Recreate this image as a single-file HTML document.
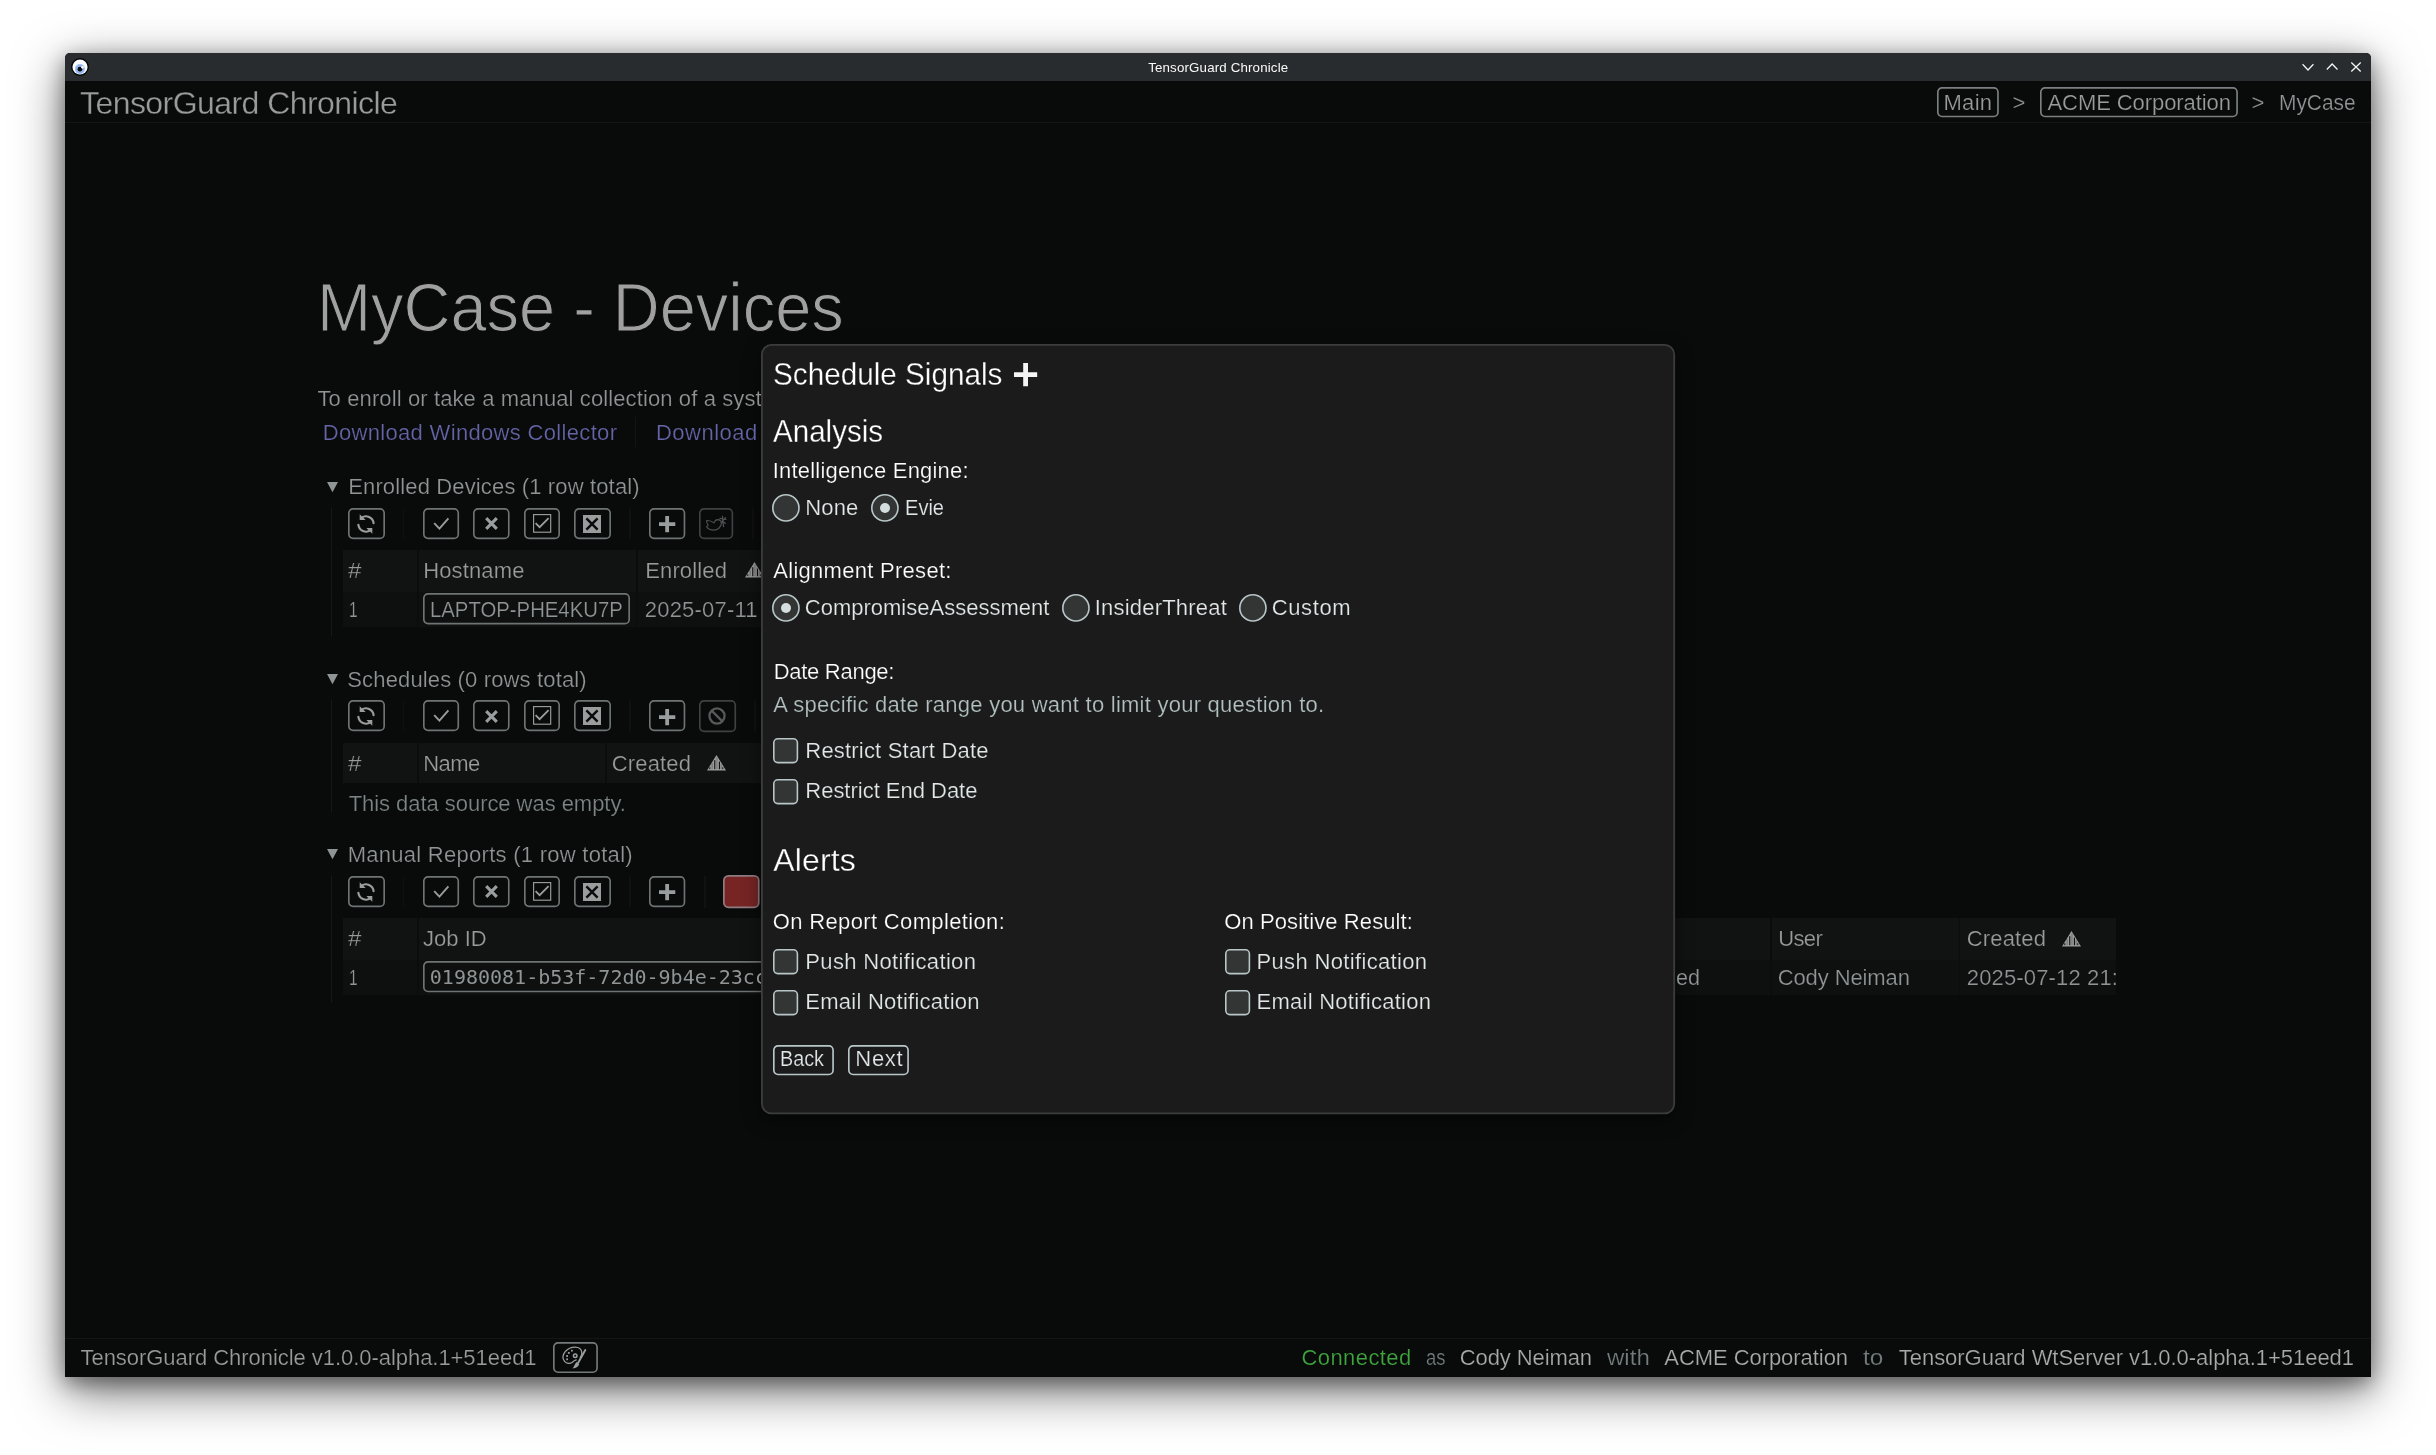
<!DOCTYPE html>
<html lang="en"><head><meta charset="utf-8"><title>TensorGuard Chronicle</title>
<style>
html,body{margin:0;padding:0;background:#fff}
body{width:2436px;height:1455px;overflow:hidden;position:relative;font-family:"Liberation Sans", sans-serif}
#page{position:absolute;left:0;top:0;width:2436px;height:1455px;overflow:hidden}
.a{position:absolute;box-sizing:border-box}
.t{position:absolute;white-space:nowrap;line-height:1;display:block}
#txt{position:absolute;left:0;top:0;width:2436px;height:1455px;will-change:transform}
svg{position:absolute;overflow:visible}
</style></head><body><div id="page">
<div class="a" style="left:65.00px;top:53.00px;width:2306.00px;height:1324.00px;background:#090a0a;border-radius:5px 5px 0 0;box-shadow:0 14px 50px rgba(0,0,0,.56),0 6px 20px rgba(0,0,0,.38)"></div>
<div class="a" style="left:65.00px;top:53.00px;width:2306.00px;height:28.00px;background:#282c2e;border-radius:5px 5px 0 0"></div>
<svg style="left:69.85px;top:57.15px" width="20" height="20" viewBox="0 0 20 20"><circle cx="10" cy="10" r="8.9" fill="#050506"/><circle cx="10" cy="10" r="7.55" fill="#fbfcff"/><circle cx="9.95" cy="12.1" r="5.0" fill="#9fc0ee"/><circle cx="9.95" cy="12.1" r="3.9" fill="#7fa6e4" opacity=".6"/><circle cx="9.95" cy="12.2" r="2.35" fill="#05070c"/><circle cx="12.4" cy="10.3" r="1.25" fill="#ffffff"/></svg>
<svg style="left:2302.00px;top:60.00px" width="12" height="12" viewBox="0 0 12 12"><path d="M0.6 4.3 L6.0 10.0 L11.4 4.3" fill="none" stroke="#f6f6f6" stroke-width="1.25"/></svg>
<svg style="left:2326.00px;top:60.00px" width="12" height="12" viewBox="0 0 12 12"><path d="M0.8 9.5 L6.1 4.0 L11.5 9.5" fill="none" stroke="#f6f6f6" stroke-width="1.25"/></svg>
<svg style="left:2350.00px;top:60.00px" width="12" height="12" viewBox="0 0 12 12"><path d="M1.3 2.5 L10.7 11.5 M10.7 2.5 L1.3 11.5" fill="none" stroke="#f6f6f6" stroke-width="1.25"/></svg>
<div class="a" style="left:65.00px;top:122.20px;width:2306.00px;height:1.20px;background:#141515"></div>
<div class="a" style="left:65.00px;top:1337.80px;width:2306.00px;height:1.20px;background:#141515"></div>
<svg style="left:1937.00px;top:87.40px" width="61.80" height="30.30"><rect x="0.82" y="0.82" width="60.15" height="28.65" rx="4.2" ry="4.2" fill="none" stroke="#7c8080" stroke-width="1.65"/></svg>
<svg style="left:2040.00px;top:87.40px" width="197.90" height="30.30"><rect x="0.82" y="0.82" width="196.25" height="28.65" rx="4.2" ry="4.2" fill="none" stroke="#7c8080" stroke-width="1.65"/></svg>
<div class="a" style="left:634.80px;top:416.50px;width:1.40px;height:30.50px;background:#131414"></div>
<svg style="left:326.90px;top:481.60px" width="11" height="10.2" viewBox="0 0 11 10.2"><path d="M0 0 H11 L5.5 10.2 Z" fill="#8f9494"/></svg>
<svg style="left:326.90px;top:674.20px" width="11" height="10.2" viewBox="0 0 11 10.2"><path d="M0 0 H11 L5.5 10.2 Z" fill="#8f9494"/></svg>
<svg style="left:326.90px;top:849.40px" width="11" height="10.2" viewBox="0 0 11 10.2"><path d="M0 0 H11 L5.5 10.2 Z" fill="#8f9494"/></svg>
<div class="a" style="left:331.20px;top:507.50px;width:1.30px;height:128.30px;background:#161717"></div>
<div class="a" style="left:331.20px;top:700.00px;width:1.30px;height:111.70px;background:#161717"></div>
<div class="a" style="left:331.20px;top:876.00px;width:1.30px;height:127.00px;background:#161717"></div>
<svg style="left:348.00px;top:507.90px" width="37.00" height="31.20"><rect x="0.82" y="0.82" width="35.35" height="29.55" rx="4.2" ry="4.2" fill="none" stroke="#6e7474" stroke-width="1.65"/></svg>
<svg style="left:423.00px;top:507.90px" width="36.10" height="31.20"><rect x="0.82" y="0.82" width="34.45" height="29.55" rx="4.2" ry="4.2" fill="none" stroke="#6e7474" stroke-width="1.65"/></svg>
<svg style="left:473.00px;top:507.90px" width="36.60" height="31.20"><rect x="0.82" y="0.82" width="34.95" height="29.55" rx="4.2" ry="4.2" fill="none" stroke="#6e7474" stroke-width="1.65"/></svg>
<svg style="left:524.00px;top:507.90px" width="36.00" height="31.20"><rect x="0.82" y="0.82" width="34.35" height="29.55" rx="4.2" ry="4.2" fill="none" stroke="#6e7474" stroke-width="1.65"/></svg>
<svg style="left:574.00px;top:507.90px" width="37.00" height="31.20"><rect x="0.82" y="0.82" width="35.35" height="29.55" rx="4.2" ry="4.2" fill="none" stroke="#6e7474" stroke-width="1.65"/></svg>
<svg style="left:648.90px;top:507.90px" width="36.30" height="31.20"><rect x="0.82" y="0.82" width="34.65" height="29.55" rx="4.2" ry="4.2" fill="none" stroke="#6e7474" stroke-width="1.65"/></svg>
<div class="a" style="left:402.80px;top:507.90px;width:1.50px;height:31.20px;background:#0f100f"></div>
<div class="a" style="left:629.30px;top:507.90px;width:1.50px;height:31.20px;background:#0f100f"></div>
<svg style="left:356.30px;top:512.80px" width="20" height="22" viewBox="0 0 20 22"><g transform="translate(10,11)"><g fill="none" stroke="#999d9d" stroke-width="2.2" stroke-linecap="round"><path d="M-4.6 -6.2 A7.7 7.7 0 0 1 7.6 -0.9"/><path d="M-7.6 0.9 A7.7 7.7 0 0 0 4.6 6.2"/></g><path d="M-6.3 -9.8 L-6.3 -4.0 L-0.3 -4.0 Z" fill="#999d9d"/><path d="M6.3 9.8 L6.3 4.0 L0.3 4.0 Z" fill="#999d9d"/></g></svg>
<svg style="left:423.00px;top:507.90px" width="36" height="31" viewBox="0 0 36 31"><path d="M11.2 15.2 L16.4 20.6 L25.4 10.4" fill="none" stroke="#999d9d" stroke-width="1.9"/></svg>
<svg style="left:484.70px;top:517.10px" width="13" height="13" viewBox="0 0 13 13"><path d="M1.2 1.2 L11.8 11.8 M11.8 1.2 L1.2 11.8" fill="none" stroke="#999d9d" stroke-width="3.1"/></svg>
<svg style="left:532.90px;top:513.70px" width="18.3" height="18.8" viewBox="0 0 18.3 18.8"><rect x="0.6" y="0.6" width="17.1" height="17.6" fill="none" stroke="#999d9d" stroke-width="1.15"/><path d="M2.6 9.2 L6.6 13.2 L15.6 4.2" fill="none" stroke="#999d9d" stroke-width="1.8"/></svg>
<svg style="left:583.05px;top:514.75px" width="18" height="18" viewBox="0 0 18 18"><rect x="0" y="0" width="18" height="18" fill="#999d9d"/><path d="M3.4 3.4 L14.6 14.6 M14.6 3.4 L3.4 14.6" fill="none" stroke="#090a0a" stroke-width="2.4"/></svg>
<svg style="left:658.80px;top:515.95px" width="16.3" height="16.3" viewBox="0 0 16.3 16.3"><path d="M8.15 0 V16.3 M0 8.15 H16.3" fill="none" stroke="#999d9d" stroke-width="3.8"/></svg>
<svg style="left:698.90px;top:507.90px" width="34.20" height="31.20"><rect x="0.82" y="0.82" width="32.55" height="29.55" rx="4.2" ry="4.2" fill="none" stroke="#3e4242" stroke-width="1.65"/></svg>
<svg style="left:698.90px;top:507.90px" width="35" height="32" viewBox="0 0 35 32"><g fill="none" stroke="#4b5050" stroke-width="1.15" stroke-linecap="round" stroke-linejoin="round"><path d="M7.6 12.5 C9.5 12.3 12.5 13 14.9 14.9 C15.5 13.2 17 11.8 18.8 11.6 C21.2 11.6 22.6 13.4 22.4 15.4 C22.2 18.8 19 22 14.9 22.1 C11.8 22.1 9 20.8 7.6 18.6 C8.4 18.2 9 17.6 9.2 17 C8.2 15.8 7.6 14.2 7.6 12.5 Z"/><path d="M23.5 8.4 L23.7 13.2 L24.6 18.6 M21.0 10.4 L26.8 11.4 M26.4 9.6 L22.2 14.6 M23.7 13.2 L26.4 15.4" stroke-width="1.3"/></g></svg>
<div class="a" style="left:752.20px;top:507.90px;width:1.50px;height:31.20px;background:#0f100f"></div>
<svg style="left:348.00px;top:700.45px" width="37.00" height="31.20"><rect x="0.82" y="0.82" width="35.35" height="29.55" rx="4.2" ry="4.2" fill="none" stroke="#6e7474" stroke-width="1.65"/></svg>
<svg style="left:423.00px;top:700.45px" width="36.10" height="31.20"><rect x="0.82" y="0.82" width="34.45" height="29.55" rx="4.2" ry="4.2" fill="none" stroke="#6e7474" stroke-width="1.65"/></svg>
<svg style="left:473.00px;top:700.45px" width="36.60" height="31.20"><rect x="0.82" y="0.82" width="34.95" height="29.55" rx="4.2" ry="4.2" fill="none" stroke="#6e7474" stroke-width="1.65"/></svg>
<svg style="left:524.00px;top:700.45px" width="36.00" height="31.20"><rect x="0.82" y="0.82" width="34.35" height="29.55" rx="4.2" ry="4.2" fill="none" stroke="#6e7474" stroke-width="1.65"/></svg>
<svg style="left:574.00px;top:700.45px" width="37.00" height="31.20"><rect x="0.82" y="0.82" width="35.35" height="29.55" rx="4.2" ry="4.2" fill="none" stroke="#6e7474" stroke-width="1.65"/></svg>
<svg style="left:648.90px;top:700.45px" width="36.30" height="31.20"><rect x="0.82" y="0.82" width="34.65" height="29.55" rx="4.2" ry="4.2" fill="none" stroke="#6e7474" stroke-width="1.65"/></svg>
<div class="a" style="left:402.80px;top:700.45px;width:1.50px;height:31.20px;background:#0f100f"></div>
<div class="a" style="left:629.30px;top:700.45px;width:1.50px;height:31.20px;background:#0f100f"></div>
<svg style="left:356.30px;top:705.35px" width="20" height="22" viewBox="0 0 20 22"><g transform="translate(10,11)"><g fill="none" stroke="#999d9d" stroke-width="2.2" stroke-linecap="round"><path d="M-4.6 -6.2 A7.7 7.7 0 0 1 7.6 -0.9"/><path d="M-7.6 0.9 A7.7 7.7 0 0 0 4.6 6.2"/></g><path d="M-6.3 -9.8 L-6.3 -4.0 L-0.3 -4.0 Z" fill="#999d9d"/><path d="M6.3 9.8 L6.3 4.0 L0.3 4.0 Z" fill="#999d9d"/></g></svg>
<svg style="left:423.00px;top:700.45px" width="36" height="31" viewBox="0 0 36 31"><path d="M11.2 15.2 L16.4 20.6 L25.4 10.4" fill="none" stroke="#999d9d" stroke-width="1.9"/></svg>
<svg style="left:484.70px;top:709.65px" width="13" height="13" viewBox="0 0 13 13"><path d="M1.2 1.2 L11.8 11.8 M11.8 1.2 L1.2 11.8" fill="none" stroke="#999d9d" stroke-width="3.1"/></svg>
<svg style="left:532.90px;top:706.25px" width="18.3" height="18.8" viewBox="0 0 18.3 18.8"><rect x="0.6" y="0.6" width="17.1" height="17.6" fill="none" stroke="#999d9d" stroke-width="1.15"/><path d="M2.6 9.2 L6.6 13.2 L15.6 4.2" fill="none" stroke="#999d9d" stroke-width="1.8"/></svg>
<svg style="left:583.05px;top:707.30px" width="18" height="18" viewBox="0 0 18 18"><rect x="0" y="0" width="18" height="18" fill="#999d9d"/><path d="M3.4 3.4 L14.6 14.6 M14.6 3.4 L3.4 14.6" fill="none" stroke="#090a0a" stroke-width="2.4"/></svg>
<svg style="left:658.80px;top:708.50px" width="16.3" height="16.3" viewBox="0 0 16.3 16.3"><path d="M8.15 0 V16.3 M0 8.15 H16.3" fill="none" stroke="#999d9d" stroke-width="3.8"/></svg>
<svg style="left:698.90px;top:699.95px" width="37.10" height="32.20"><rect x="0.82" y="0.82" width="35.45" height="30.55" rx="4.2" ry="4.2" fill="none" stroke="#3e4242" stroke-width="1.65"/></svg>
<svg style="left:707.25px;top:705.60px" width="20" height="20" viewBox="0 0 20 20"><circle cx="10" cy="10" r="7.55" fill="none" stroke="#555a5a" stroke-width="2.3"/><path d="M4.6 4.6 L15.4 15.4" stroke="#555a5a" stroke-width="2.3"/></svg>
<div class="a" style="left:754.00px;top:700.45px;width:1.50px;height:31.20px;background:#0f100f"></div>
<svg style="left:348.00px;top:875.90px" width="37.00" height="31.20"><rect x="0.82" y="0.82" width="35.35" height="29.55" rx="4.2" ry="4.2" fill="none" stroke="#6e7474" stroke-width="1.65"/></svg>
<svg style="left:423.00px;top:875.90px" width="36.10" height="31.20"><rect x="0.82" y="0.82" width="34.45" height="29.55" rx="4.2" ry="4.2" fill="none" stroke="#6e7474" stroke-width="1.65"/></svg>
<svg style="left:473.00px;top:875.90px" width="36.60" height="31.20"><rect x="0.82" y="0.82" width="34.95" height="29.55" rx="4.2" ry="4.2" fill="none" stroke="#6e7474" stroke-width="1.65"/></svg>
<svg style="left:524.00px;top:875.90px" width="36.00" height="31.20"><rect x="0.82" y="0.82" width="34.35" height="29.55" rx="4.2" ry="4.2" fill="none" stroke="#6e7474" stroke-width="1.65"/></svg>
<svg style="left:574.00px;top:875.90px" width="37.00" height="31.20"><rect x="0.82" y="0.82" width="35.35" height="29.55" rx="4.2" ry="4.2" fill="none" stroke="#6e7474" stroke-width="1.65"/></svg>
<svg style="left:648.90px;top:875.90px" width="36.30" height="31.20"><rect x="0.82" y="0.82" width="34.65" height="29.55" rx="4.2" ry="4.2" fill="none" stroke="#6e7474" stroke-width="1.65"/></svg>
<div class="a" style="left:402.80px;top:875.90px;width:1.50px;height:31.20px;background:#0f100f"></div>
<div class="a" style="left:629.30px;top:875.90px;width:1.50px;height:31.20px;background:#0f100f"></div>
<svg style="left:356.30px;top:880.80px" width="20" height="22" viewBox="0 0 20 22"><g transform="translate(10,11)"><g fill="none" stroke="#999d9d" stroke-width="2.2" stroke-linecap="round"><path d="M-4.6 -6.2 A7.7 7.7 0 0 1 7.6 -0.9"/><path d="M-7.6 0.9 A7.7 7.7 0 0 0 4.6 6.2"/></g><path d="M-6.3 -9.8 L-6.3 -4.0 L-0.3 -4.0 Z" fill="#999d9d"/><path d="M6.3 9.8 L6.3 4.0 L0.3 4.0 Z" fill="#999d9d"/></g></svg>
<svg style="left:423.00px;top:875.90px" width="36" height="31" viewBox="0 0 36 31"><path d="M11.2 15.2 L16.4 20.6 L25.4 10.4" fill="none" stroke="#999d9d" stroke-width="1.9"/></svg>
<svg style="left:484.70px;top:885.10px" width="13" height="13" viewBox="0 0 13 13"><path d="M1.2 1.2 L11.8 11.8 M11.8 1.2 L1.2 11.8" fill="none" stroke="#999d9d" stroke-width="3.1"/></svg>
<svg style="left:532.90px;top:881.70px" width="18.3" height="18.8" viewBox="0 0 18.3 18.8"><rect x="0.6" y="0.6" width="17.1" height="17.6" fill="none" stroke="#999d9d" stroke-width="1.15"/><path d="M2.6 9.2 L6.6 13.2 L15.6 4.2" fill="none" stroke="#999d9d" stroke-width="1.8"/></svg>
<svg style="left:583.05px;top:882.75px" width="18" height="18" viewBox="0 0 18 18"><rect x="0" y="0" width="18" height="18" fill="#999d9d"/><path d="M3.4 3.4 L14.6 14.6 M14.6 3.4 L3.4 14.6" fill="none" stroke="#090a0a" stroke-width="2.4"/></svg>
<svg style="left:658.80px;top:883.95px" width="16.3" height="16.3" viewBox="0 0 16.3 16.3"><path d="M8.15 0 V16.3 M0 8.15 H16.3" fill="none" stroke="#999d9d" stroke-width="3.8"/></svg>
<div class="a" style="left:704.00px;top:875.90px;width:1.60px;height:31.80px;background:#101110"></div>
<svg style="left:723.20px;top:874.90px" width="36.60" height="33.20"><rect x="0.85" y="0.85" width="34.90" height="31.50" rx="4.6" ry="4.6" fill="#762424" stroke="#8f7c80" stroke-width="1.7"/></svg>
<div class="a" style="left:342.60px;top:550.30px;width:1157.40px;height:41.80px;background:#111212"></div>
<div class="a" style="left:342.60px;top:592.10px;width:1157.40px;height:35.30px;background:#0e0f0f"></div>
<div class="a" style="left:416.90px;top:549.80px;width:1.80px;height:77.60px;background:#0b0c0c"></div>
<div class="a" style="left:636.00px;top:549.80px;width:1.80px;height:77.60px;background:#0b0c0c"></div>
<div class="a" style="left:342.60px;top:742.80px;width:1157.40px;height:40.20px;background:#111212"></div>
<div class="a" style="left:416.90px;top:742.30px;width:1.80px;height:40.70px;background:#0b0c0c"></div>
<div class="a" style="left:605.10px;top:742.30px;width:1.80px;height:40.70px;background:#0b0c0c"></div>
<div class="a" style="left:342.60px;top:918.30px;width:1773.30px;height:41.80px;background:#111212"></div>
<div class="a" style="left:342.60px;top:960.10px;width:1773.30px;height:35.40px;background:#0e0f0f"></div>
<div class="a" style="left:416.90px;top:917.80px;width:1.80px;height:77.70px;background:#0b0c0c"></div>
<div class="a" style="left:1769.80px;top:917.80px;width:1.80px;height:77.70px;background:#0b0c0c"></div>
<div class="a" style="left:1958.70px;top:917.80px;width:1.80px;height:77.70px;background:#0b0c0c"></div>
<svg style="left:423.00px;top:593.30px" width="207.00" height="31.50"><rect x="0.82" y="0.82" width="205.35" height="29.85" rx="4.2" ry="4.2" fill="none" stroke="#6e7474" stroke-width="1.65"/></svg>
<svg style="left:423.00px;top:961.30px" width="1077.00" height="31.30"><rect x="0.82" y="0.82" width="1075.35" height="29.65" rx="4.2" ry="4.2" fill="none" stroke="#6e7474" stroke-width="1.65"/></svg>
<svg style="left:744.60px;top:562.40px" width="19.0" height="15.4" viewBox="0 0 19.0 15.4"><path d="M9.5 0 L19.0 15.4 L0 15.4 Z" fill="#9c9c9c"/><g fill="#111212"><rect x="2.3" y="12.2" width="1.0" height="2.0"/><rect x="7.2" y="5.2" width="1.1" height="9.0"/><rect x="11.9" y="6.6" width="1.1" height="7.6000000000000005"/><rect x="15.3" y="12.2" width="1.0" height="2.0"/></g><g fill="#111212" opacity=".35"><rect x="4.6" y="8" width="1.0" height="6.1"/><rect x="9.5" y="2.5" width="0.9" height="11.600000000000001"/><rect x="13.7" y="9" width="0.9" height="5.1"/></g></svg>
<svg style="left:706.70px;top:755.40px" width="19.0" height="15.4" viewBox="0 0 19.0 15.4"><path d="M9.5 0 L19.0 15.4 L0 15.4 Z" fill="#9c9c9c"/><g fill="#111212"><rect x="2.3" y="12.2" width="1.0" height="2.0"/><rect x="7.2" y="5.2" width="1.1" height="9.0"/><rect x="11.9" y="6.6" width="1.1" height="7.6000000000000005"/><rect x="15.3" y="12.2" width="1.0" height="2.0"/></g><g fill="#111212" opacity=".35"><rect x="4.6" y="8" width="1.0" height="6.1"/><rect x="9.5" y="2.5" width="0.9" height="11.600000000000001"/><rect x="13.7" y="9" width="0.9" height="5.1"/></g></svg>
<svg style="left:2061.80px;top:930.50px" width="19.0" height="15.4" viewBox="0 0 19.0 15.4"><path d="M9.5 0 L19.0 15.4 L0 15.4 Z" fill="#9c9c9c"/><g fill="#111212"><rect x="2.3" y="12.2" width="1.0" height="2.0"/><rect x="7.2" y="5.2" width="1.1" height="9.0"/><rect x="11.9" y="6.6" width="1.1" height="7.6000000000000005"/><rect x="15.3" y="12.2" width="1.0" height="2.0"/></g><g fill="#111212" opacity=".35"><rect x="4.6" y="8" width="1.0" height="6.1"/><rect x="9.5" y="2.5" width="0.9" height="11.600000000000001"/><rect x="13.7" y="9" width="0.9" height="5.1"/></g></svg>
<svg style="left:553.00px;top:1341.90px" width="44.90" height="31.10"><rect x="0.82" y="0.82" width="43.25" height="29.45" rx="4.2" ry="4.2" fill="none" stroke="#747a7a" stroke-width="1.65"/></svg>
<svg style="left:560.00px;top:1345.00px" width="28" height="26" viewBox="0 0 28 26"><g fill="none" stroke="#9aa0a0" stroke-width="1.25" stroke-linecap="round" stroke-linejoin="round"><path d="M20.3 12.4 C21.3 11 21.9 9.4 21.8 7.6 C21.6 4.2 18.8 2 15.2 2 C11.2 2 7.6 3.6 5.2 6.6 C2.8 9.6 2.4 13.6 4.6 16.4 C6.5 18.6 10 19 12 17.5 C13.4 16.2 14.6 15.2 16.2 14.8"/><circle cx="15.2" cy="10.7" r="1.75" stroke-width="1.5"/><path d="M25.3 5.0 L18.2 17.8" stroke-width="1.9"/></g><g fill="#9aa0a0"><rect x="11.0" y="4.8" width="1.8" height="1.7"/><rect x="7.9" y="7.0" width="1.8" height="1.8"/><rect x="6.2" y="10.1" width="1.8" height="1.8"/><rect x="6.3" y="13.4" width="1.7" height="1.8"/><path d="M16.4 17.0 L19.2 18.8 C18.6 21.6 16.6 23.3 12.4 23.6 C14.2 22 14.2 19.8 16.4 17.0 Z"/></g></svg>
<div class="a" style="left:762.00px;top:345.00px;width:912.00px;height:768.20px;background:#1b1b1b;border-radius:10px;box-shadow:0 6px 18px rgba(0,0,0,.55)"></div>
<svg style="left:761.00px;top:343.90px" width="914.10" height="770.30"><rect x="0.90" y="0.90" width="912.30" height="768.50" rx="9.6" ry="9.6" fill="#1b1b1b" stroke="#3c3c3c" stroke-width="1.8"/></svg>
<svg style="left:1013.80px;top:363.20px" width="23.2" height="23.2" viewBox="0 0 23.2 23.2"><path d="M11.6 0 V23.2 M0 11.6 H23.2" fill="none" stroke="#f4f4f4" stroke-width="4.8"/></svg>
<svg style="left:771.95px;top:493.70px" width="27.80" height="27.80"><circle cx="13.90" cy="13.90" r="13.10" fill="#333434" stroke="#b8c6c8" stroke-width="1.6"/></svg>
<svg style="left:871.35px;top:493.70px" width="27.80" height="27.80"><circle cx="13.90" cy="13.90" r="13.10" fill="#333434" stroke="#b8c6c8" stroke-width="1.6"/></svg>
<svg style="left:880.25px;top:502.60px" width="10.00" height="10.00"><circle cx="5.00" cy="5.00" r="5.00" fill="#d4dede" stroke="none" stroke-width="0"/></svg>
<svg style="left:771.95px;top:594.10px" width="27.80" height="27.80"><circle cx="13.90" cy="13.90" r="13.10" fill="#333434" stroke="#b8c6c8" stroke-width="1.6"/></svg>
<svg style="left:780.85px;top:603.00px" width="10.00" height="10.00"><circle cx="5.00" cy="5.00" r="5.00" fill="#d4dede" stroke="none" stroke-width="0"/></svg>
<svg style="left:1061.95px;top:594.10px" width="27.80" height="27.80"><circle cx="13.90" cy="13.90" r="13.10" fill="#333434" stroke="#b8c6c8" stroke-width="1.6"/></svg>
<svg style="left:1239.20px;top:594.10px" width="27.80" height="27.80"><circle cx="13.90" cy="13.90" r="13.10" fill="#333434" stroke="#b8c6c8" stroke-width="1.6"/></svg>
<svg style="left:773.00px;top:737.80px" width="25.20" height="25.40"><rect x="0.80" y="0.80" width="23.60" height="23.80" rx="4.0" ry="4.0" fill="#333434" stroke="#b8c6c8" stroke-width="1.6"/></svg>
<svg style="left:773.00px;top:778.60px" width="25.20" height="25.40"><rect x="0.80" y="0.80" width="23.60" height="23.80" rx="4.0" ry="4.0" fill="#333434" stroke="#b8c6c8" stroke-width="1.6"/></svg>
<svg style="left:773.00px;top:949.00px" width="25.20" height="25.40"><rect x="0.80" y="0.80" width="23.60" height="23.80" rx="4.0" ry="4.0" fill="#333434" stroke="#b8c6c8" stroke-width="1.6"/></svg>
<svg style="left:773.00px;top:989.90px" width="25.20" height="25.40"><rect x="0.80" y="0.80" width="23.60" height="23.80" rx="4.0" ry="4.0" fill="#333434" stroke="#b8c6c8" stroke-width="1.6"/></svg>
<svg style="left:1225.00px;top:949.00px" width="25.20" height="25.40"><rect x="0.80" y="0.80" width="23.60" height="23.80" rx="4.0" ry="4.0" fill="#333434" stroke="#b8c6c8" stroke-width="1.6"/></svg>
<svg style="left:1225.00px;top:989.90px" width="25.20" height="25.40"><rect x="0.80" y="0.80" width="23.60" height="23.80" rx="4.0" ry="4.0" fill="#333434" stroke="#b8c6c8" stroke-width="1.6"/></svg>
<svg style="left:773.00px;top:1044.50px" width="60.90" height="30.30"><rect x="0.82" y="0.82" width="59.25" height="28.65" rx="4.2" ry="4.2" fill="none" stroke="#b8c6c8" stroke-width="1.65"/></svg>
<svg style="left:848.00px;top:1044.50px" width="60.90" height="30.30"><rect x="0.82" y="0.82" width="59.25" height="28.65" rx="4.2" ry="4.2" fill="none" stroke="#b8c6c8" stroke-width="1.65"/></svg>
<div id="txt">
<span class="t" style='left:1148.20px;top:60.80px;font-size:13.3px;color:#fafafa;letter-spacing:0.163px;-webkit-text-stroke:0.00px #282c2e'>TensorGuard Chronicle</span>
<span class="t" style='left:80.00px;top:86.80px;font-size:32px;color:#9a9a9a;letter-spacing:-0.562px;-webkit-text-stroke:0.32px #090a0a'>TensorGuard Chronicle</span>
<span class="t" style='left:1943.50px;top:92.00px;font-size:22px;color:#9a9a9a;letter-spacing:0.284px;-webkit-text-stroke:0.22px #090a0a'>Main</span>
<span class="t" style='left:2012.60px;top:92.00px;font-size:22px;color:#8f9494;-webkit-text-stroke:0.22px #090a0a'>&gt;</span>
<span class="t" style='left:2047.50px;top:92.00px;font-size:22px;color:#9a9a9a;letter-spacing:-0.079px;-webkit-text-stroke:0.22px #090a0a'>ACME Corporation</span>
<span class="t" style='left:2251.50px;top:92.00px;font-size:22px;color:#8f9494;-webkit-text-stroke:0.22px #090a0a'>&gt;</span>
<span class="t" style='left:2278.75px;top:92.00px;font-size:22px;color:#8f9494;-webkit-text-stroke:0.22px #090a0a;transform:scaleX(0.9503);transform-origin:0 0'>MyCase</span>
<span class="t" style='left:316.59px;top:272.80px;font-size:69px;color:#a0a0a0;-webkit-text-stroke:1.10px #090a0a;transform:scaleX(0.9410);transform-origin:0 0'>MyCase - Devices</span>
<span class="t" style='left:317.50px;top:387.80px;font-size:22px;color:#8f9494;letter-spacing:0.113px;-webkit-text-stroke:0.22px #090a0a;width:443.50px;overflow:hidden'>To enroll or take a manual collection of a syst</span>
<span class="t" style='left:322.70px;top:421.70px;font-size:22px;color:#6464a6;letter-spacing:0.328px;-webkit-text-stroke:0.22px #090a0a'>Download Windows Collector</span>
<span class="t" style='left:656.00px;top:421.70px;font-size:22px;color:#6464a6;letter-spacing:0.485px;-webkit-text-stroke:0.22px #090a0a;width:105.00px;overflow:hidden'>Download</span>
<span class="t" style='left:348.20px;top:476.20px;font-size:22px;color:#8f9494;letter-spacing:0.141px;-webkit-text-stroke:0.22px #090a0a'>Enrolled Devices (1 row total)</span>
<span class="t" style='left:347.30px;top:668.80px;font-size:22px;color:#8f9494;letter-spacing:0.145px;-webkit-text-stroke:0.22px #090a0a'>Schedules (0 rows total)</span>
<span class="t" style='left:347.70px;top:844.00px;font-size:22px;color:#8f9494;letter-spacing:0.273px;-webkit-text-stroke:0.22px #090a0a'>Manual Reports (1 row total)</span>
<span class="t" style='left:348.30px;top:559.70px;font-size:22px;color:#9a9a9a;-webkit-text-stroke:0.22px #111212;transform:scaleX(1.1000);transform-origin:0 0'>#</span>
<span class="t" style='left:423.20px;top:559.70px;font-size:22px;color:#9a9a9a;letter-spacing:0.138px;-webkit-text-stroke:0.22px #111212'>Hostname</span>
<span class="t" style='left:645.20px;top:559.70px;font-size:22px;color:#9a9a9a;letter-spacing:0.150px;-webkit-text-stroke:0.22px #111212'>Enrolled</span>
<span class="t" style='left:348.80px;top:599.00px;font-size:22px;color:#8f9494;-webkit-text-stroke:0.22px #0e0f0f;transform:scaleX(0.7000);transform-origin:0 0'>1</span>
<span class="t" style='left:430.38px;top:598.70px;font-size:22px;color:#8f9494;-webkit-text-stroke:0.22px #0e0f0f;transform:scaleX(0.9237);transform-origin:0 0'>LAPTOP-PHE4KU7P</span>
<span class="t" style='left:644.80px;top:598.70px;font-size:22px;color:#8f9494;letter-spacing:0.204px;-webkit-text-stroke:0.22px #0e0f0f;width:116.20px;overflow:hidden'>2025-07-11</span>
<span class="t" style='left:348.30px;top:752.70px;font-size:22px;color:#9a9a9a;-webkit-text-stroke:0.22px #111212;transform:scaleX(1.1000);transform-origin:0 0'>#</span>
<span class="t" style='left:423.20px;top:752.70px;font-size:22px;color:#9a9a9a;letter-spacing:-0.550px;-webkit-text-stroke:0.22px #111212'>Name</span>
<span class="t" style='left:611.80px;top:752.70px;font-size:22px;color:#9a9a9a;letter-spacing:0.145px;-webkit-text-stroke:0.22px #111212'>Created</span>
<span class="t" style='left:348.70px;top:793.20px;font-size:22px;color:#7c8484;letter-spacing:-0.048px;-webkit-text-stroke:0.22px #090a0a'>This data source was empty.</span>
<span class="t" style='left:348.30px;top:927.80px;font-size:22px;color:#9a9a9a;-webkit-text-stroke:0.22px #111212;transform:scaleX(1.1000);transform-origin:0 0'>#</span>
<span class="t" style='left:423.00px;top:927.80px;font-size:22px;color:#9a9a9a;letter-spacing:0.021px;-webkit-text-stroke:0.22px #111212'>Job ID</span>
<span class="t" style='left:348.80px;top:967.00px;font-size:22px;color:#8f9494;-webkit-text-stroke:0.22px #0e0f0f;transform:scaleX(0.7000);transform-origin:0 0'>1</span>
<span class="t" style='left:429.80px;top:967.20px;font-size:20px;color:#8f9494;font-family:"DejaVu Sans Mono", "Liberation Mono", monospace;width:331.20px;overflow:hidden'>01980081-b53f-72d0-9b4e-23cc</span>
<span class="t" style='left:1675.90px;top:967.00px;font-size:22px;color:#8f9494;-webkit-text-stroke:0.22px #0e0f0f;transform:scaleX(0.9813);transform-origin:0 0'>ed</span>
<span class="t" style='left:1778.20px;top:927.80px;font-size:22px;color:#9a9a9a;letter-spacing:-0.608px;-webkit-text-stroke:0.22px #111212'>User</span>
<span class="t" style='left:1966.80px;top:927.80px;font-size:22px;color:#9a9a9a;letter-spacing:0.145px;-webkit-text-stroke:0.22px #111212'>Created</span>
<span class="t" style='left:1777.70px;top:967.00px;font-size:22px;color:#8f9494;letter-spacing:-0.104px;-webkit-text-stroke:0.22px #0e0f0f'>Cody Neiman</span>
<span class="t" style='left:1966.80px;top:967.00px;font-size:22px;color:#8f9494;letter-spacing:0.150px;-webkit-text-stroke:0.22px #0e0f0f;width:149.00px;overflow:hidden'>2025-07-12 21:</span>
<span class="t" style='left:80.50px;top:1347.00px;font-size:22px;color:#9a9a9a;letter-spacing:-0.047px;-webkit-text-stroke:0.22px #090a0a'>TensorGuard Chronicle v1.0.0-alpha.1+51eed1</span>
<span class="t" style='left:1301.50px;top:1346.70px;font-size:22px;color:#3fa63f;letter-spacing:0.415px;-webkit-text-stroke:0.22px #090a0a'>Connected</span>
<span class="t" style='left:1425.50px;top:1346.70px;font-size:22px;color:#737d7d;-webkit-text-stroke:0.22px #090a0a;transform:scaleX(0.8392);transform-origin:0 0'>as</span>
<span class="t" style='left:1459.80px;top:1346.70px;font-size:22px;color:#a8aaaa;letter-spacing:-0.104px;-webkit-text-stroke:0.22px #090a0a'>Cody Neiman</span>
<span class="t" style='left:1607.39px;top:1346.70px;font-size:22px;color:#737d7d;-webkit-text-stroke:0.22px #090a0a;transform:scaleX(1.0929);transform-origin:0 0'>with</span>
<span class="t" style='left:1664.30px;top:1346.70px;font-size:22px;color:#a8aaaa;letter-spacing:-0.059px;-webkit-text-stroke:0.22px #090a0a'>ACME Corporation</span>
<span class="t" style='left:1863.00px;top:1346.70px;font-size:22px;color:#737d7d;-webkit-text-stroke:0.22px #090a0a;transform:scaleX(1.1042);transform-origin:0 0'>to</span>
<span class="t" style='left:1898.80px;top:1346.70px;font-size:22px;color:#a8aaaa;letter-spacing:-0.037px;-webkit-text-stroke:0.22px #090a0a'>TensorGuard WtServer v1.0.0-alpha.1+51eed1</span>
<span class="t" style='left:772.77px;top:358.20px;font-size:32px;color:#ffffff;-webkit-text-stroke:0.32px #1b1b1b;transform:scaleX(0.9279);transform-origin:0 0'>Schedule Signals</span>
<span class="t" style='left:773.30px;top:415.20px;font-size:32px;color:#ffffff;-webkit-text-stroke:0.32px #1b1b1b;transform:scaleX(0.9242);transform-origin:0 0'>Analysis</span>
<span class="t" style='left:772.70px;top:460.00px;font-size:22px;color:#ffffff;letter-spacing:0.204px;-webkit-text-stroke:0.22px #1b1b1b'>Intelligence Engine:</span>
<span class="t" style='left:805.30px;top:497.20px;font-size:22px;color:#e2e8e8;letter-spacing:0.114px;-webkit-text-stroke:0.22px #1b1b1b'>None</span>
<span class="t" style='left:905.39px;top:497.20px;font-size:22px;color:#e2e8e8;-webkit-text-stroke:0.22px #1b1b1b;transform:scaleX(0.9119);transform-origin:0 0'>Evie</span>
<span class="t" style='left:773.30px;top:560.00px;font-size:22px;color:#ffffff;letter-spacing:0.280px;-webkit-text-stroke:0.22px #1b1b1b'>Alignment Preset:</span>
<span class="t" style='left:804.80px;top:597.00px;font-size:22px;color:#e2e8e8;-webkit-text-stroke:0.22px #1b1b1b'>CompromiseAssessment</span>
<span class="t" style='left:1094.70px;top:597.00px;font-size:22px;color:#e2e8e8;letter-spacing:0.208px;-webkit-text-stroke:0.22px #1b1b1b'>InsiderThreat</span>
<span class="t" style='left:1271.80px;top:597.00px;font-size:22px;color:#e2e8e8;letter-spacing:0.586px;-webkit-text-stroke:0.22px #1b1b1b'>Custom</span>
<span class="t" style='left:773.70px;top:661.20px;font-size:22px;color:#ffffff;letter-spacing:-0.281px;-webkit-text-stroke:0.22px #1b1b1b'>Date Range:</span>
<span class="t" style='left:773.30px;top:694.20px;font-size:22px;color:#b2c0c0;letter-spacing:0.249px;-webkit-text-stroke:0.22px #1b1b1b'>A specific date range you want to limit your question to.</span>
<span class="t" style='left:805.30px;top:739.50px;font-size:22px;color:#e2e8e8;letter-spacing:0.195px;-webkit-text-stroke:0.22px #1b1b1b'>Restrict Start Date</span>
<span class="t" style='left:805.30px;top:780.00px;font-size:22px;color:#e2e8e8;letter-spacing:-0.017px;-webkit-text-stroke:0.22px #1b1b1b'>Restrict End Date</span>
<span class="t" style='left:773.30px;top:843.80px;font-size:32px;color:#ffffff;letter-spacing:0.121px;-webkit-text-stroke:0.32px #1b1b1b'>Alerts</span>
<span class="t" style='left:772.70px;top:911.20px;font-size:22px;color:#ffffff;letter-spacing:0.356px;-webkit-text-stroke:0.22px #1b1b1b'>On Report Completion:</span>
<span class="t" style='left:805.30px;top:950.50px;font-size:22px;color:#e2e8e8;letter-spacing:0.347px;-webkit-text-stroke:0.22px #1b1b1b'>Push Notification</span>
<span class="t" style='left:805.30px;top:990.60px;font-size:22px;color:#e2e8e8;letter-spacing:0.252px;-webkit-text-stroke:0.22px #1b1b1b'>Email Notification</span>
<span class="t" style='left:1224.30px;top:911.20px;font-size:22px;color:#ffffff;letter-spacing:0.080px;-webkit-text-stroke:0.22px #1b1b1b'>On Positive Result:</span>
<span class="t" style='left:1256.50px;top:950.50px;font-size:22px;color:#e2e8e8;letter-spacing:0.341px;-webkit-text-stroke:0.22px #1b1b1b'>Push Notification</span>
<span class="t" style='left:1256.50px;top:990.60px;font-size:22px;color:#e2e8e8;letter-spacing:0.264px;-webkit-text-stroke:0.22px #1b1b1b'>Email Notification</span>
<span class="t" style='left:780.40px;top:1048.30px;font-size:22px;color:#e2e8e8;-webkit-text-stroke:0.22px #1b1b1b;transform:scaleX(0.8996);transform-origin:0 0'>Back</span>
<span class="t" style='left:855.30px;top:1048.30px;font-size:22px;color:#e2e8e8;letter-spacing:0.692px;-webkit-text-stroke:0.22px #1b1b1b'>Next</span>
</div>
</div></body></html>
